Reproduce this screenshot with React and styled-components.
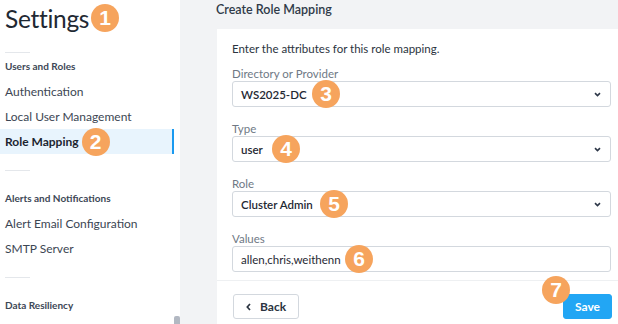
import styled, { createGlobalStyle } from 'styled-components'

const Global = createGlobalStyle`
    html, body {
        margin: 0;
        padding: 0;
        width: 618px;
        height: 324px;
        overflow: hidden;
        background: #f2f3f5;
    }
    * { box-sizing: border-box; }
`

const Pagina = styled.div`
    display: flex;
    width: 618px;
    height: 324px;
    font-family: "Lato", "Liberation Sans", sans-serif;
    overflow: hidden;
`

//barra lateral
const Lateral = styled.aside`
    position: relative;
    width: 180px;
    flex-shrink: 0;
    background: #ffffff;
`
const Titulo = styled.h1`
    display: flex;
    align-items: center;
    height: 36px;
    margin: 0;
    padding-left: 5px;
    font-size: 24.5px;
    font-weight: 400;
    color: #1f2933;
    letter-spacing: -0.3px;
`
const Divisor = styled.div`
    width: 25px;
    height: 1px;
    margin: 16px 0 0 5px;
    background: #e4e7eb;
`
const Secao = styled.div`
    height: 26px;
    line-height: 26px;
    margin-top: ${p => (p.$primeira ? '0' : '14px')};
    padding-left: 5px;
    font-size: 10px;
    font-weight: 700;
    color: #3d4756;
`
const Item = styled.div`
    display: flex;
    align-items: center;
    width: 174px;
    height: 25px;
    padding-left: 5px;
    font-size: 12px;
    font-weight: ${p => (p.$ativo ? 700 : 400)};
    color: ${p => (p.$ativo ? '#1c2530' : '#3c4653')};
    background: ${p => (p.$ativo ? '#e8f4fd' : 'transparent')};
    border-right: 2px solid ${p => (p.$ativo ? '#1a9af0' : 'transparent')};
`
const Rolagem = styled.div`
    position: absolute;
    right: 0;
    bottom: 0;
    width: 6px;
    height: 8px;
    border-radius: 2px 2px 0 0;
    background: #b2b8c2;
`

//marcadores numerados
const Marcador = styled.span`
    display: inline-flex;
    align-items: center;
    justify-content: center;
    width: 28px;
    height: 28px;
    border-radius: 50%;
    background: #f6a45d;
    color: #ffffff;
    font-family: "Liberation Sans", "Lato", sans-serif;
    font-size: 21px;
    font-weight: 700;
    letter-spacing: 0;
    flex-shrink: 0;
    margin-left: ${p => p.$margem || 0}px;
`
const MarcadorSobre = styled(Marcador)`
    position: absolute;
    left: ${p => p.$x}px;
    top: ${p => (p.$y === undefined ? '50%' : `${p.$y}px`)};
    transform: ${p => (p.$y === undefined ? 'translateY(-50%)' : 'none')};
    margin: 0;
`

//area principal
const Principal = styled.main`
    flex: 1;
    display: flex;
    flex-direction: column;
    padding-left: 36px;
`
const Cabecalho = styled.div`
    height: 29px;
    padding-top: 2px;
    line-height: 15px;
    font-size: 12.5px;
    font-weight: 600;
    color: #2f3a48;
`
const Cartao = styled.section`
    flex: 1;
    margin-left: 1px;
    background: #ffffff;
`
const Corpo = styled.div`
    padding: 12px 7px 0 15px;
`
const Intro = styled.p`
    margin: 0 0 10px;
    line-height: 15px;
    font-size: 11.5px;
    color: #2b3440;
`
const Campo = styled.div`
    margin-bottom: 14px;
`
const Rotulo = styled.div`
    height: 15px;
    line-height: 15px;
    font-size: 11.5px;
    color: #6f7985;
`
const Caixa = styled.div`
    position: relative;
    display: flex;
    align-items: center;
    justify-content: space-between;
    height: 26px;
    padding: 0 9px 0 8px;
    border: 1px solid #d3d8de;
    border-radius: 3px;
    font-size: 11.5px;
    font-weight: ${p => (p.$select ? 600 : 400)};
    color: #1f2933;
`
const Rodape = styled.div`
    display: flex;
    justify-content: space-between;
    align-items: center;
    margin-top: -6px;
    padding: 13px 6px 0 16px;
    border-top: 1px solid #eef0f2;
`
const Botao = styled.button`
    position: relative;
    display: flex;
    align-items: center;
    gap: 9px;
    height: 25px;
    padding: 0 ${p => (p.$primario ? '11px' : '12px')};
    border: 1px solid ${p => (p.$primario ? '#22a6f4' : '#d3d8de')};
    border-radius: 3px;
    background: ${p => (p.$primario ? '#22a6f4' : '#ffffff')};
    color: ${p => (p.$primario ? '#ffffff' : '#2b3440')};
    font-family: "Lato", "Liberation Sans", sans-serif;
    font-size: 12px;
    font-weight: 700;
`

const Seta = () => (
    <svg width="7" height="5" viewBox="0 0 7 5">
        <path d="M1 1.2 L3.5 3.6 L6 1.2" fill="none" stroke="#2d3748" strokeWidth="1.6" />
    </svg>
)
const Voltar = () => (
    <svg width="5" height="8" viewBox="0 0 5 8">
        <path d="M4 1 L1.3 4 L4 7" fill="none" stroke="#2b3440" strokeWidth="1.7" />
    </svg>
)

const campos = [
    { rotulo: 'Directory or Provider', valor: 'WS2025-DC', select: true, n: 3, x: 79 },
    { rotulo: 'Type', valor: 'user', select: true, n: 4, x: 39 },
    { rotulo: 'Role', valor: 'Cluster Admin', select: true, n: 5, x: 87 },
    { rotulo: 'Values', valor: 'allen,chris,weithenn', select: false, n: 6, x: 112 },
]

const App = () => {
    return (
        <Pagina>
            <Global />
            <Lateral>
                <Titulo>
                    Settings<Marcador $margem={2}>1</Marcador>
                </Titulo>
                <Divisor />
                <Secao $primeira>Users and Roles</Secao>
                <Item>Authentication</Item>
                <Item>Local User Management</Item>
                <Item $ativo>
                    Role Mapping<Marcador $margem={3}>2</Marcador>
                </Item>
                <Divisor />
                <Secao>Alerts and Notifications</Secao>
                <Item>Alert Email Configuration</Item>
                <Item>SMTP Server</Item>
                <Divisor />
                <Secao>Data Resiliency</Secao>
                <Rolagem />
            </Lateral>
            <Principal>
                <Cabecalho>Create Role Mapping</Cabecalho>
                <Cartao>
                    <Corpo>
                        <Intro>Enter the attributes for this role mapping.</Intro>
                        {campos.map(c => (
                            <Campo key={c.rotulo}>
                                <Rotulo>{c.rotulo}</Rotulo>
                                <Caixa $select={c.select}>
                                    <span>{c.valor}</span>
                                    {c.select && <Seta />}
                                    <MarcadorSobre $x={c.x}>{c.n}</MarcadorSobre>
                                </Caixa>
                            </Campo>
                        ))}
                    </Corpo>
                    <Rodape>
                        <Botao>
                            <Voltar />
                            Back
                        </Botao>
                        <Botao $primario>
                            Save
                            <MarcadorSobre $x={-22} $y={-19}>7</MarcadorSobre>
                        </Botao>
                    </Rodape>
                </Cartao>
            </Principal>
        </Pagina>
    )
}

export default App
